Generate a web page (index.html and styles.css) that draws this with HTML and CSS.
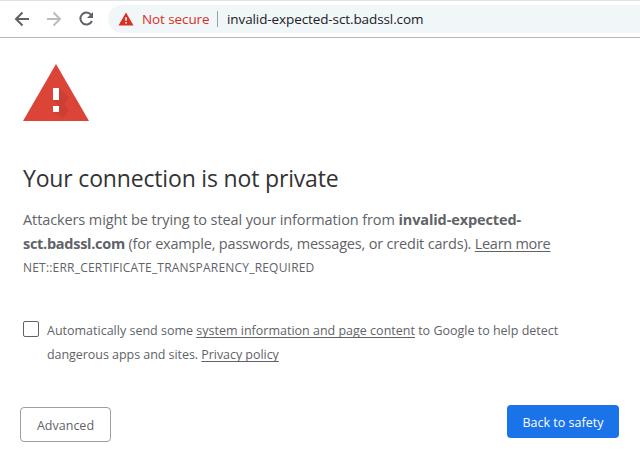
FILE: index.html
```
<!DOCTYPE html>
<html lang="en">
<head>
<meta charset="utf-8">
<title>Privacy error</title>
<link rel="stylesheet" href="styles.css">
</head>
<body>
<header class="toolbar">
  <svg class="nav" width="16" height="16" viewBox="0 0 16 16" fill="none" stroke="#5f6368" stroke-width="2"><path d="M15 8H2.5M8.5 1.5 2 8l6.500 6.500"/></svg>
  <svg class="nav" width="16" height="16" viewBox="0 0 16 16" fill="none" stroke="#babcbe" stroke-width="2"><path d="M1 8h12.500M7.500 1.500 14 8l-6.500 6.500"/></svg>
  <svg class="nav" width="16" height="16" viewBox="0 0 16 16"><path d="M13 3.700A6 6 0 1 0 13.900 10" fill="none" stroke="#5f6368" stroke-width="2"/><path d="M15 1v6H9z" fill="#5f6368"/></svg>
  <div class="omnibox">
    <svg class="warn" width="16" height="14" viewBox="0 0 16 14"><path d="M8 .5 15.500 13.500H.5z" fill="#d93025"/><path d="M7.200 5.300h1.600v3.400H7.200zM7.200 9.900h1.600v1.600H7.200z" fill="#fff"/></svg>
    <span class="status">Not secure</span>
    <span class="divider"></span>
    <span class="url">invalid-expected-sct.badssl.com</span>
  </div>
</header>
<main class="page">
  <svg class="icon" width="66" height="57" viewBox="0 0 66 57">
    <path d="M33 0 66 57H0z" fill="#db4437"/>
    <path d="M36 24l10 9.500-5 6.500 5 6-5 7.500L30 48l6-6-6-6z" fill="#c53d31" opacity=".65"/>
    <path d="M30 24h6v12h-6zM30 42h6v6h-6z" fill="#fff"/>
  </svg>
  <h1>Your connection is not private</h1>
  <p class="message">Attackers might be trying to steal your information from <b>invalid-expected-</b><br><span class="second"><b>sct.badssl.com</b> (for example, passwords, messages, or credit cards). <a>Learn more</a></span></p>
  <p class="code">NET::ERR_CERTIFICATE_TRANSPARENCY_REQUIRED</p>
  <div class="optin">
    <span class="checkbox"></span>
    <p>Automatically send some <a>system information and page content</a> to Google to help detect<br><span class="last">dangerous apps and sites. <a>Privacy policy</a></span></p>
  </div>
  <div class="actions">
    <button class="secondary">Advanced</button>
    <button class="primary">Back to safety</button>
  </div>
</main>
</body>
</html>
```
FILE: styles.css
```
* { box-sizing: border-box; }
body { margin: 0; background: #fff; color: #5f6368; font-family: "Open Sans", "Noto Sans", sans-serif; height: 468px; overflow: hidden; }
p, h1 { margin: 0; white-space: nowrap; }
a { text-decoration: underline; text-underline-offset: 2px; text-decoration-thickness: 1px; text-decoration-skip-ink: none; }
.toolbar { height: 38px; border-top: 1px solid #dee1e6; border-bottom: 1px solid #b6b6b6; display: flex; align-items: center; padding-left: 14px; gap: 16px; }
.nav { flex: none; }
.omnibox { flex: 1; height: 28px; margin-left: -2px; background: #f1f6f9; border-radius: 14px 0 0 14px; display: flex; align-items: center; padding-left: 10px; font-size: 13.500px; letter-spacing: -.1px; white-space: nowrap; }
.status { color: #d93025; width: 67px; margin-left: 8px; }
.divider { width: 1px; height: 16px; background: #9aa0a6; margin: 0 9px 0 8px; }
.url { color: #202124; }
.page { padding: 26px 21px 0 23px; }
.icon { display: block; margin-top: 1px; height: 57px; position: relative; top: -1px; }
h1 { margin-top: 41px; color: #333; font-size: 23px; font-weight: 400; line-height: 30px; letter-spacing: -.17px; }
.message { margin-top: 15px; font-size: 14.500px; line-height: 24px; letter-spacing: -.105px; }
.second { letter-spacing: -.19px; }
.second b { letter-spacing: -.28px; }
.second a { letter-spacing: -.28px; }
.code { font-size: 12px; line-height: 24px; letter-spacing: .2px; }
.optin { margin-top: 39px; display: flex; gap: 8px; font-size: 12.500px; line-height: 24px; }
.last { letter-spacing: -.05px; }
.checkbox { width: 16px; height: 16px; margin-top: 2px; border: 1px solid #5f6368; border-radius: 2px; }
.actions { margin: 38px 0 0 -3px; display: flex; justify-content: space-between; align-items: flex-start; }
button { font: 12.500px "Open Sans", sans-serif; border-radius: 4px; padding: 0; white-space: nowrap; }
.secondary { width: 91px; height: 35px; margin-top: 2px; padding-top: 1px; border: 1px solid #9aa0a6; background: #fff; color: #5f6368; }
.primary { width: 112px; height: 33px; padding-top: 1px; border: 0; background: #1a73e8; color: #fff; }
```
